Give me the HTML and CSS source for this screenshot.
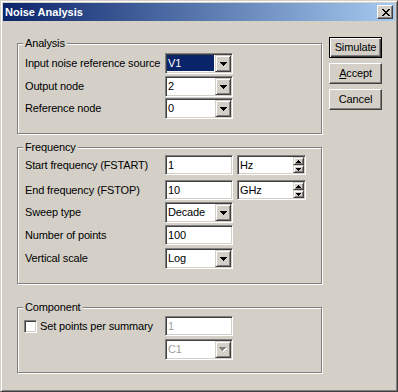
FILE: index.html
```html
<!DOCTYPE html>
<html lang="en">
<head>
    <meta charset="UTF-8">
    <title>Noise Analysis</title>
    <link rel="stylesheet" href="styles.css">
</head>
<body>
    <div class="window">
        <div class="titlebar">
            <span class="title">Noise Analysis</span>
            <span class="close-btn">
                <svg width="8" height="7" viewBox="0 0 8 7" shape-rendering="crispEdges">
                    <path d="M0 0h2v1H0zM6 0h2v1H6zM1 1h2v1H1zM5 1h2v1H5zM2 2h4v1H2zM3 3h2v1H3zM2 4h4v1H2zM1 5h2v1H1zM5 5h2v1H5zM0 6h2v1H0zM6 6h2v1H6z" fill="#000"/>
                </svg>
            </span>
        </div>
        <div class="client">
            <div class="groups">
                <div class="group group-analysis">
                    <span class="group-title">Analysis</span>
                    <div class="rows rows-analysis">
                        <span class="label">Input noise reference source</span>
                        <div class="combo"><span class="combo-text selected">V1</span><span class="drop-btn"><svg width="7" height="4" shape-rendering="crispEdges"><path d="M0 0h7v1H0zM1 1h5v1H1zM2 2h3v1H2zM3 3h1v1H3z" fill="#000"/></svg></span></div>
                        <span class="label">Output node</span>
                        <div class="combo"><span class="combo-text">2</span><span class="drop-btn"><svg width="7" height="4" shape-rendering="crispEdges"><path d="M0 0h7v1H0zM1 1h5v1H1zM2 2h3v1H2zM3 3h1v1H3z" fill="#000"/></svg></span></div>
                        <span class="label">Reference node</span>
                        <div class="combo"><span class="combo-text">0</span><span class="drop-btn"><svg width="7" height="4" shape-rendering="crispEdges"><path d="M0 0h7v1H0zM1 1h5v1H1zM2 2h3v1H2zM3 3h1v1H3z" fill="#000"/></svg></span></div>
                    </div>
                </div>

                <div class="group group-frequency">
                    <span class="group-title">Frequency</span>
                    <div class="rows rows-frequency">
                        <span class="label">Start frequency (FSTART)</span>
                        <div class="edit">1</div>
                        <div class="spin"><span class="spin-text">Hz</span><span class="spin-btns"><span class="spin-btn"><svg width="5" height="3" shape-rendering="crispEdges"><path d="M2 0h1v1H2zM1 1h3v1H1zM0 2h5v1H0z" fill="#000"/></svg></span><span class="spin-btn"><svg width="5" height="3" shape-rendering="crispEdges"><path d="M0 0h5v1H0zM1 1h3v1H1zM2 2h1v1H2z" fill="#000"/></svg></span></span></div>
                        <span class="label">End frequency (FSTOP)</span>
                        <div class="edit">10</div>
                        <div class="spin"><span class="spin-text">GHz</span><span class="spin-btns"><span class="spin-btn"><svg width="5" height="3" shape-rendering="crispEdges"><path d="M2 0h1v1H2zM1 1h3v1H1zM0 2h5v1H0z" fill="#000"/></svg></span><span class="spin-btn"><svg width="5" height="3" shape-rendering="crispEdges"><path d="M0 0h5v1H0zM1 1h3v1H1zM2 2h1v1H2z" fill="#000"/></svg></span></span></div>
                        <span class="label">Sweep type</span>
                        <div class="combo"><span class="combo-text">Decade</span><span class="drop-btn"><svg width="7" height="4" shape-rendering="crispEdges"><path d="M0 0h7v1H0zM1 1h5v1H1zM2 2h3v1H2zM3 3h1v1H3z" fill="#000"/></svg></span></div>
                        <span class="label">Number of points</span>
                        <div class="edit">100</div>
                        <span class="label">Vertical scale</span>
                        <div class="combo"><span class="combo-text">Log</span><span class="drop-btn"><svg width="7" height="4" shape-rendering="crispEdges"><path d="M0 0h7v1H0zM1 1h5v1H1zM2 2h3v1H2zM3 3h1v1H3z" fill="#000"/></svg></span></div>
                    </div>
                </div>

                <div class="group group-component">
                    <span class="group-title">Component</span>
                    <div class="rows rows-component">
                        <span class="label check-label"><span class="checkbox"></span>Set points per summary</span>
                        <div class="edit disabled">1</div>
                        <span class="label"></span>
                        <div class="combo disabled"><span class="combo-text">C1</span><span class="drop-btn"><svg width="8" height="5" shape-rendering="crispEdges"><path d="M1 1h7v1H1zM2 2h5v1H2zM3 3h3v1H3zM4 4h1v1H4z" fill="#fff"/><path d="M0 0h7v1H0zM1 1h5v1H1zM2 2h3v1H2zM3 3h1v1H3z" fill="#808080"/></svg></span></div>
                    </div>
                </div>
            </div>

            <div class="buttons">
                <div class="btn btn-default"><span class="btn-face">Simulate</span></div>
                <div class="btn"><span class="btn-face"><u>A</u>ccept</span></div>
                <div class="btn"><span class="btn-face">Cancel</span></div>
            </div>
        </div>
    </div>
</body>
</html>
```

FILE: styles.css
```css
body {
    margin: 0;
    font-family: "Liberation Sans", Arial, sans-serif;
    font-size: 11px;
    letter-spacing: -0.15px;
    color: #000;
    background: #d4d0c8;
}

.window {
    box-sizing: border-box;
    width: 398px;
    height: 392px;
    padding: 2px;
    background: #d4d0c8;
    border: 1px solid;
    border-color: #d4d0c8 #404040 #404040 #d4d0c8;
    box-shadow: inset 1px 1px 0 #fff, inset -1px -1px 0 #808080;
}

.titlebar {
    height: 18px;
    display: flex;
    align-items: center;
    justify-content: space-between;
    padding: 0 2px;
    background: linear-gradient(to right, #0a246a, #a6caf0);
}
.title {
    color: #fff;
    font-weight: bold;
    letter-spacing: 0;
    line-height: 18px;
}
.close-btn {
    box-sizing: border-box;
    width: 16px;
    height: 14px;
    display: flex;
    align-items: center;
    justify-content: center;
    padding-left: 1px;
    background: #d4d0c8;
    border: 1px solid;
    border-color: #fff #404040 #404040 #fff;
    box-shadow: inset -1px -1px 0 #808080;
}

.client {
    display: flex;
    align-items: flex-start;
    margin-top: 1px;
    padding: 15px 0 0 14px;
}

.groups {
    width: 305px;
    margin-top: 6px;
}

.group {
    position: relative;
    border: 1px solid #808080;
    box-shadow: 1px 1px 0 #fff, inset 1px 1px 0 #fff;
    padding-left: 7px;
}
.group-title {
    position: absolute;
    top: -7px;
    left: 5px;
    padding: 0 2px;
    line-height: 13px;
    background: #d4d0c8;
}
.group-analysis {
    padding-top: 9px;
    padding-bottom: 14px;
}
.group-frequency {
    margin-top: 13px;
    padding-top: 7px;
    padding-bottom: 14px;
}
.group-component {
    margin-top: 23px;
    padding-top: 8px;
    padding-bottom: 12px;
}

.rows {
    display: grid;
    grid-template-columns: 140px 72px 69px;
    align-items: start;
}
.rows-analysis {
    grid-template-rows: 23px 22px 21px;
}
.rows-frequency {
    grid-template-rows: 25px 22px 23px 23px 21px;
}
.rows-component {
    grid-template-rows: 23px 21px;
}
.label {
    grid-column: 1;
    line-height: 20px;
    white-space: nowrap;
}

.edit, .combo, .spin, .checkbox {
    box-sizing: border-box;
    background: #fff;
    border: 1px solid;
    border-color: #808080 #fff #fff #808080;
    box-shadow: inset 1px 1px 0 #404040, inset -1px -1px 0 #d4d0c8;
}
.edit {
    grid-column: 2;
    width: 68px;
    height: 20px;
    padding: 0 2px;
    line-height: 18px;
}
.combo {
    grid-column: 2;
    width: 68px;
    height: 21px;
    padding: 1px;
    display: flex;
}
.combo-text {
    flex: 1;
    margin-right: 1px;
    padding-left: 1px;
    line-height: 16px;
    height: 16px;
}
.combo-text.selected {
    background: #0a246a;
    color: #fff;
}
.drop-btn {
    box-sizing: border-box;
    width: 16px;
    height: 17px;
    display: flex;
    align-items: center;
    justify-content: center;
    background: #d4d0c8;
    border: 1px solid;
    border-color: #d4d0c8 #404040 #404040 #d4d0c8;
    box-shadow: inset 1px 1px 0 #fff, inset -1px -1px 0 #808080;
}

.spin {
    grid-column: 3;
    width: 69px;
    height: 20px;
    padding: 1px;
    display: flex;
}
.spin-text {
    flex: 1;
    padding-left: 1px;
    line-height: 16px;
}
.spin-btns {
    width: 11px;
    display: flex;
    flex-direction: column;
}
.spin-btn {
    box-sizing: border-box;
    height: 8px;
    display: flex;
    align-items: center;
    justify-content: center;
    background: #d4d0c8;
    border: 1px solid;
    border-color: #d4d0c8 #404040 #404040 #d4d0c8;
    box-shadow: inset 1px 1px 0 #fff, inset -1px -1px 0 #808080;
}

.check-label {
    display: flex;
    align-items: center;
    margin-left: -1px;
}
.checkbox {
    width: 13px;
    height: 13px;
    margin-right: 3px;
}

.disabled {
    color: #a0a0a0;
}

.buttons {
    display: flex;
    flex-direction: column;
    gap: 5px;
    margin-left: 7px;
}
.btn {
    box-sizing: border-box;
    width: 53px;
    height: 21px;
    display: flex;
    background: #d4d0c8;
    border: 1px solid;
    border-color: #fff #404040 #404040 #fff;
    box-shadow: inset -1px -1px 0 #808080;
}
.btn-face {
    flex: 1;
    text-align: center;
    line-height: 18px;
}
.btn-default {
    border: 1px solid #000;
    box-shadow: inset 1px 1px 0 #fff, inset -1px -1px 0 #404040, inset -2px -2px 0 #808080;
}
```
